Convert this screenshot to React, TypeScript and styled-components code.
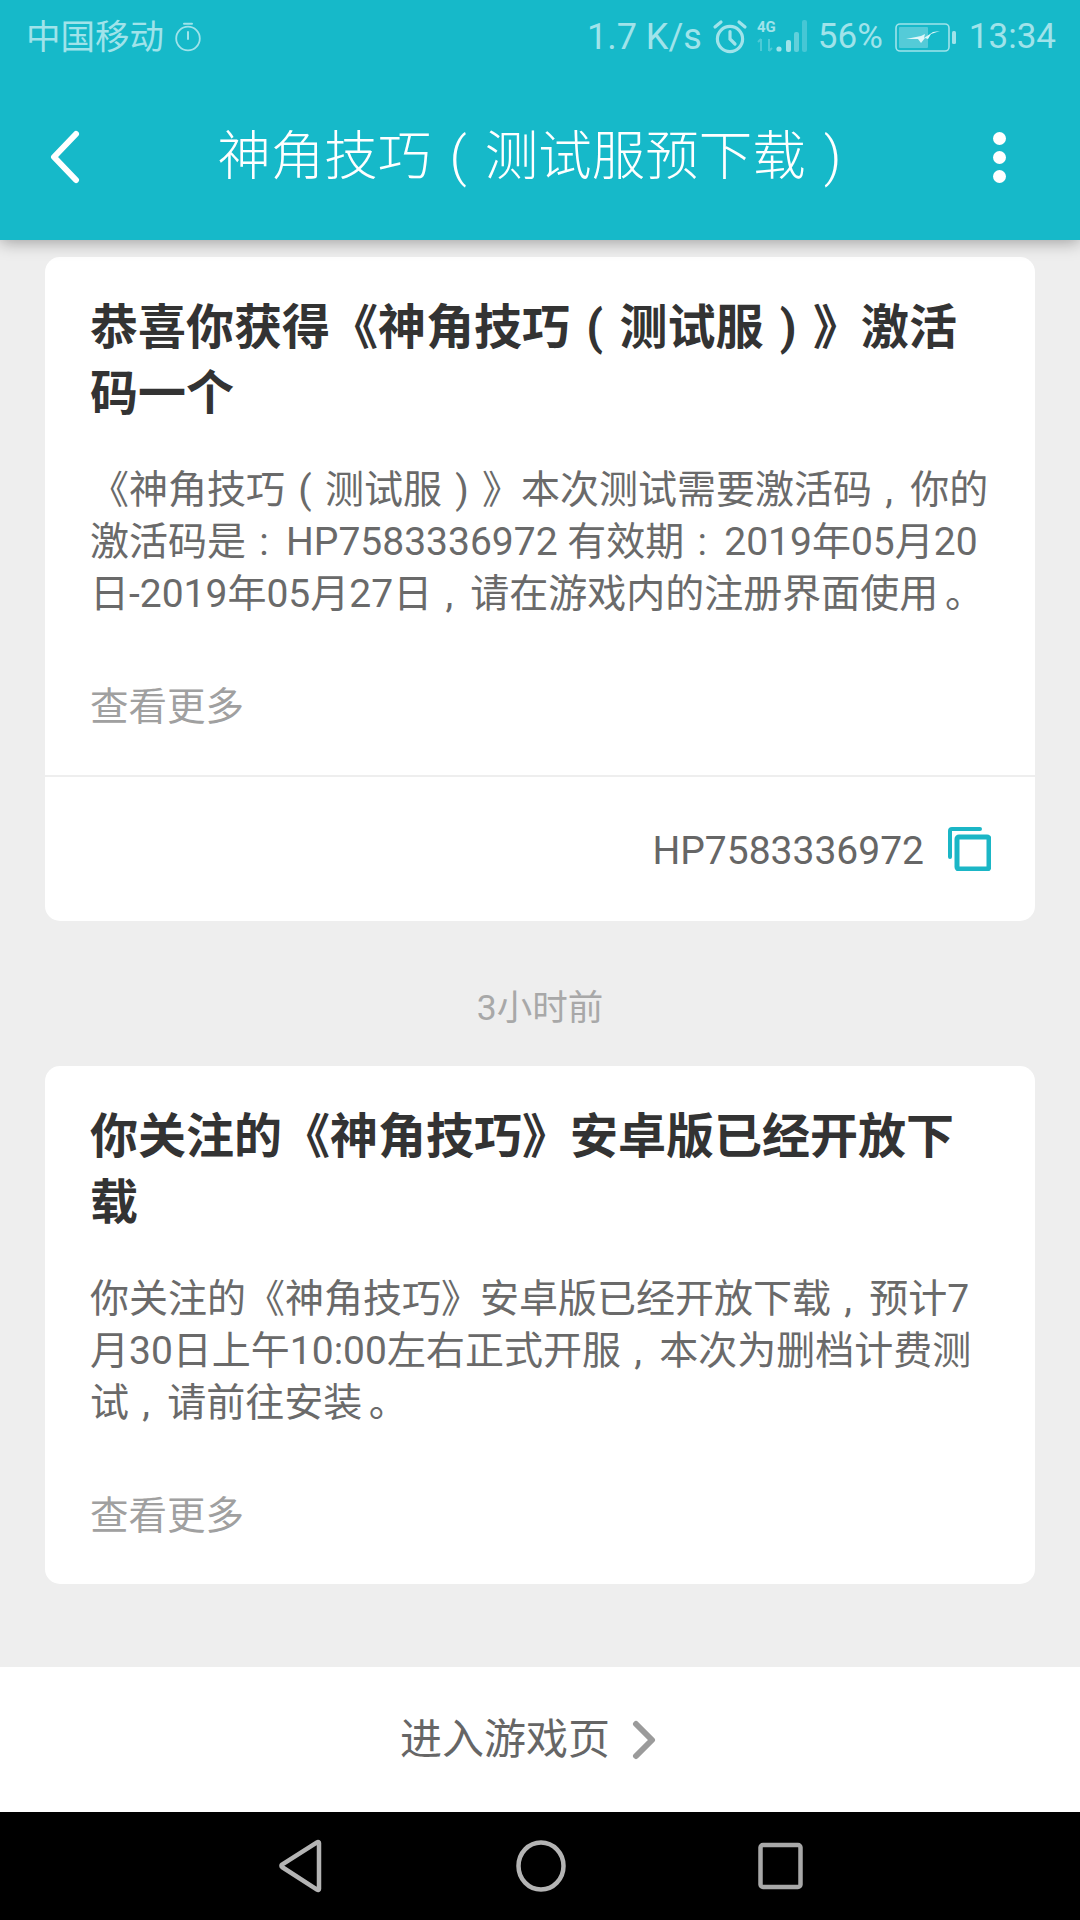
import React from 'react';
import styled, { createGlobalStyle } from 'styled-components';

const notices = [
	{
		id: 'code',
		title: '恭喜你获得《神角技巧（测试服）》激活码一个',
		body: '《神角技巧（测试服）》本次测试需要激活码，你的激活码是：HP7583336972 有效期：2019年05月20日-2019年05月27日，请在游戏内的注册界面使用。',
		code: 'HP7583336972',
	},
	{
		id: 'download',
		time: '3小时前',
		title: '你关注的《神角技巧》安卓版已经开放下载',
		body: '你关注的《神角技巧》安卓版已经开放下载，预计7月30日上午10:00左右正式开服，本次为删档计费测试，请前往安装。',
	},
];

// the reference font centres these marks in their full-width box, so pad
// narrow marks with thin spaces to keep the same advance
function spaced(text: string) {
	return text
		.replace(/（/g, '\u2004(\u2004')
		.replace(/）/g, '\u2004)\u2004')
		.replace(/，/g, '\u2004,\u200a\u2004')
		.replace(/：/g, '\u2004:\u200a\u2004')
		.replace(/。/g, '\u2006。');
}

function App() {
	return (
		<Screen>
			<GlobalStyle />
			<TopBar>
				<StatusBar>
					<StatusGroup>
						<Carrier>中国移动</Carrier>
						<StatusIcon width="28" height="30" viewBox="0 0 28 30">
							<circle cx="14" cy="16.5" r="11.8" fill="none" stroke="currentColor" strokeWidth="1.8" />
							<path d="M10 1.800h8M14 10v7" fill="none" stroke="currentColor" strokeWidth="2" strokeLinecap="round" />
						</StatusIcon>
					</StatusGroup>
					<StatusGroup>
						<SpeedText>1.7 K/s</SpeedText>
						<StatusIcon width="36" height="36" viewBox="0 0 36 36">
							<circle cx="18" cy="20" r="12.6" fill="none" stroke="currentColor" strokeWidth="3.200" />
							<path d="M18 12.500V20l5 5M3 8l6-5M33 8l-6-5" fill="none" stroke="currentColor" strokeWidth="3.200" strokeLinecap="round" />
						</StatusIcon>
						<SignalIcon width="54" height="36" viewBox="0 0 54 36">
							<text x="0" y="13" fontFamily="Roboto, sans-serif" fontSize="15" fontWeight="700" fill="currentColor">4G</text>
							<path d="M4 32V20M1 23l3-3M12 20v12M15 29l-3 3" fill="none" stroke="currentColor" strokeWidth="2" opacity="0.4" />
							<circle cx="22" cy="30" r="2.6" fill="currentColor" />
							<rect x="29" y="21" width="5" height="12" rx="2" fill="currentColor" />
							<rect x="37" y="13" width="5" height="20" rx="2" fill="currentColor" opacity="0.55" />
							<rect x="45" y="1" width="5" height="32" rx="2" fill="currentColor" opacity="0.35" />
						</SignalIcon>
						<StatusText>56%</StatusText>
						<BatteryIcon width="62" height="32" viewBox="0 0 62 32">
							<rect x="1" y="3" width="53" height="27" rx="4" fill="none" stroke="currentColor" strokeWidth="1.600" />
							<rect x="4" y="6" width="29" height="21" rx="1" fill="currentColor" opacity="0.45" />
							<path d="M11 18l15-3 4-2-1 4 9-6 7-1-9 3-3 5-3-1-4 5-3-4z" fill="#dff7f9" />
							<rect x="57" y="10" width="4" height="13" rx="1.500" fill="currentColor" />
						</BatteryIcon>
						<StatusText>13:34</StatusText>
					</StatusGroup>
				</StatusBar>
				<TitleRow>
					<BackButton>
						<svg width="34" height="54" viewBox="0 0 34 54">
							<path d="M28 4L6 27l22 23" fill="none" stroke="#fff" strokeWidth="6" strokeLinecap="round" strokeLinejoin="round" />
						</svg>
					</BackButton>
					<PageTitle>{spaced('神角技巧（测试服预下载）')}</PageTitle>
					<MoreDots>
						<Dot />
						<Dot />
						<Dot />
					</MoreDots>
				</TitleRow>
			</TopBar>

			<Feed>
				{notices.map((notice) => (
					<React.Fragment key={notice.id}>
						{notice.time ? <TimeLabel>{notice.time}</TimeLabel> : null}
						<Card>
							<CardMain>
								<CardTitle>{spaced(notice.title)}</CardTitle>
								<CardBody>{spaced(notice.body)}</CardBody>
								<MoreLink>查看更多</MoreLink>
							</CardMain>
							{notice.code ? (
								<CodeRow>
									<CodeText>{notice.code}</CodeText>
									<svg width="44" height="44" viewBox="0 0 44 44">
										<path d="M3 30V4a2 2 0 0 1 2-2h28" fill="none" stroke="#1bb6c6" strokeWidth="4" strokeLinecap="round" />
										<rect x="10" y="10" width="32" height="32" rx="2" fill="none" stroke="#1bb6c6" strokeWidth="5" />
									</svg>
								</CodeRow>
							) : null}
						</Card>
					</React.Fragment>
				))}
			</Feed>

			<GameLink>
				<GameLinkText>进入游戏页</GameLinkText>
				<svg width="24" height="40" viewBox="0 0 24 40">
					<path d="M4 4l16 16L4 36" fill="none" stroke="#9b9b9b" strokeWidth="6" strokeLinecap="round" strokeLinejoin="round" />
				</svg>
			</GameLink>

			<NavBar>
				<svg width="46" height="54" viewBox="0 0 46 54">
					<path d="M41 4v46a1 1 0 0 1-1.600.800L4 28a1.500 1.500 0 0 1 0-2.400L39.400 3.200A1 1 0 0 1 41 4z" fill="none" stroke="#b4b4b4" strokeWidth="4.500" strokeLinejoin="round" />
				</svg>
				<svg width="50" height="52" viewBox="0 0 50 52">
					<ellipse cx="25" cy="26" rx="22.500" ry="23.500" fill="none" stroke="#b4b4b4" strokeWidth="4.500" />
				</svg>
				<svg width="45" height="48" viewBox="0 0 45 48">
					<rect x="2.500" y="3" width="40" height="42" rx="2.500" fill="none" stroke="#a8a8a8" strokeWidth="4.500" />
				</svg>
			</NavBar>
		</Screen>
	);
}

const GlobalStyle = createGlobalStyle`
	html, body {
		margin: 0;
		padding: 0;
	}
	* {
		box-sizing: border-box;
	}
	body {
		font-family: Roboto, "Noto Sans CJK SC", sans-serif;
	}
`;

const Screen = styled.div`
	display: flex;
	flex-direction: column;
	width: 1080px;
	height: 1920px;
	overflow: hidden;
	background: #eeeeee;
`;

const TopBar = styled.header`
	position: relative;
	z-index: 1;
	flex: none;
	height: 240px;
	background: #16b9c9;
	box-shadow: 0 2px 16px rgba(0, 0, 0, 0.35);
`;

const StatusBar = styled.div`
	display: flex;
	justify-content: space-between;
	align-items: center;
	height: 74px;
	padding: 0 24px 0 26px;
	color: #a0e3ea;
`;

const StatusGroup = styled.div`
	display: flex;
	align-items: center;
	gap: 7px;
`;

const Carrier = styled.span`
	font-size: 34.500px;
	line-height: 40px;
	margin-right: 3px;
`;

const StatusText = styled.span`
	font-size: 35px;
	line-height: 40px;
`;

const SpeedText = styled(StatusText)`
	font-size: 36px;
	margin-right: 3px;
`;

const StatusIcon = styled.svg`
	display: block;
`;

const SignalIcon = styled.svg`
	display: block;
	margin-left: 2px;
`;

const BatteryIcon = styled.svg`
	display: block;
	margin: 0 5px;
`;

const TitleRow = styled.div`
	display: flex;
	align-items: center;
	justify-content: space-between;
	height: 166px;
	padding: 0 63px 0 48px;
`;

const BackButton = styled.div`
	display: flex;
	width: 36px;
`;

const PageTitle = styled.h1`
	margin: 0 0 0 12px;
	color: #fff;
	font-size: 53.500px;
	font-weight: 300;
	line-height: 64px;
	white-space: nowrap;
`;

const MoreDots = styled.div`
	display: flex;
	flex-direction: column;
	gap: 6px;
	width: 36px;
	align-items: center;
`;

const Dot = styled.span`
	width: 13px;
	height: 13px;
	border-radius: 50%;
	background: #fff;
`;

const Feed = styled.main`
	flex: 1;
	min-height: 0;
	padding: 17px 45px 0;
`;

const Card = styled.section`
	border-radius: 15px;
	background: #fff;
`;

const CardMain = styled.div`
	padding: 38px 45px 42px;
`;

const CardTitle = styled.h2`
	margin: 0 0 37px;
	color: #333333;
	font-size: 48px;
	font-weight: 700;
	line-height: 66px;
`;

const CardBody = styled.p`
	margin: 0;
	color: #6a6a6a;
	font-size: 39px;
	font-weight: 400;
	line-height: 52px;
`;

const MoreLink = styled.div`
	margin-top: 61px;
	color: #a0a0a0;
	font-size: 38.500px;
	font-weight: 400;
	line-height: 52px;
`;

const CodeRow = styled.div`
	display: flex;
	justify-content: flex-end;
	align-items: center;
	gap: 23px;
	height: 146px;
	padding-right: 44px;
	border-top: 2px solid #eeeeee;
`;

const CodeText = styled.span`
	margin-top: 4px;
	color: #666666;
	font-size: 39px;
	line-height: 48px;
`;

const TimeLabel = styled.div`
	margin: 65px 0 36px;
	color: #a8a8a8;
	font-size: 35.500px;
	line-height: 44px;
	text-align: center;
`;

const GameLink = styled.div`
	flex: none;
	display: flex;
	justify-content: center;
	align-items: center;
	gap: 22px;
	height: 145px;
	padding-right: 24px;
	background: #fff;
`;

const GameLinkText = styled.span`
	color: #666666;
	font-size: 42px;
	font-weight: 400;
	line-height: 52px;
`;

const NavBar = styled.nav`
	flex: none;
	display: flex;
	justify-content: center;
	align-items: center;
	gap: 192px;
	height: 108px;
	background: #000;
`;

export default App;
